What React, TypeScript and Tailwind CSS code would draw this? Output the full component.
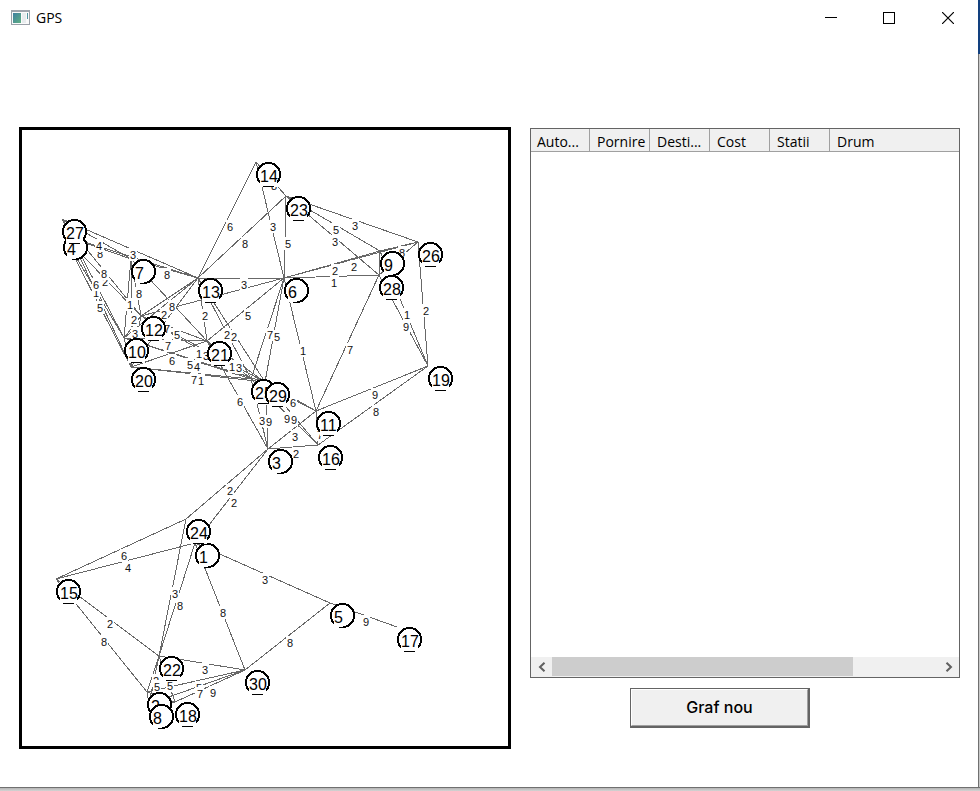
import React from "react";

type Point = [number, number];

// Top-left corner of every station's circle, in canvas units.
const stations: Record<number, Point> = {
  1: [195, 543], 2: [147, 692], 3: [268, 449], 4: [63, 235], 5: [330, 603],
  6: [284, 278], 7: [131, 259], 8: [149, 704], 9: [380, 251], 10: [124, 338],
  11: [316, 411], 12: [141, 316], 13: [198, 278], 14: [256, 162], 15: [56, 579],
  16: [318, 445], 17: [397, 627], 18: [175, 702], 19: [428, 366], 20: [131, 367],
  21: [207, 341], 22: [159, 656], 23: [286, 196], 24: [186, 519], 25: [251, 379],
  26: [418, 242], 27: [62, 219], 28: [379, 275], 29: [265, 382], 30: [245, 670],
};

// [from, to, cost]; a cost of 0 has its label hidden.
const roads: [number, number, number][] = [
  [1, 5, 3], [1, 15, 4], [1, 22, 8], [1, 30, 8], [3, 1, 2], [3, 24, 2],
  [2, 8, 0], [2, 15, 8], [2, 18, 0], [2, 22, 2], [2, 30, 5], [3, 11, 3],
  [3, 16, 2], [3, 21, 6], [3, 25, 3], [3, 29, 9], [4, 7, 8], [4, 10, 1],
  [4, 12, 2], [4, 13, 0], [4, 20, 5], [5, 17, 9], [5, 30, 8], [6, 9, 2],
  [6, 11, 1], [6, 12, 0], [6, 13, 3], [6, 14, 3], [6, 21, 5], [6, 23, 5],
  [6, 25, 7], [6, 26, 2], [6, 28, 1], [6, 29, 5], [7, 10, 1], [7, 12, 8],
  [7, 13, 8], [7, 20, 2], [7, 21, 8], [8, 18, 0], [8, 22, 5], [8, 30, 7],
  [9, 19, 1], [9, 23, 5], [9, 26, 8], [9, 28, 0], [10, 12, 3], [10, 13, 2],
  [10, 20, 0], [10, 21, 7], [10, 25, 5], [10, 27, 6], [10, 29, 4], [11, 16, 7],
  [11, 19, 9], [11, 25, 0], [11, 28, 7], [11, 29, 6], [12, 13, 0], [12, 20, 0],
  [13, 20, 7], [12, 21, 5], [12, 25, 1], [12, 27, 8], [12, 29, 3], [7, 27, 4],
  [13, 14, 6], [13, 21, 2], [13, 23, 8], [13, 25, 2], [13, 27, 3], [13, 29, 2],
  [14, 23, 8], [15, 22, 2], [15, 24, 6], [16, 19, 8], [16, 25, 9], [16, 29, 9],
  [18, 22, 5], [18, 30, 9], [19, 26, 2], [19, 28, 9], [20, 21, 6], [20, 25, 7],
  [20, 27, 0], [20, 29, 1], [21, 25, 1], [21, 29, 3], [22, 24, 3], [22, 30, 3],
  [23, 26, 3], [23, 28, 3], [26, 28, 0],
];

function Graph() {
  return (
    <svg viewBox="22 130 486 616" className="block h-auto w-full font-['Liberation_Sans',sans-serif]" role="img" aria-label="Graf">
      <g stroke="#686868" strokeWidth="1" shapeRendering="crispEdges">
        {roads.map(([a, b]) => (
          <line key={`${a}-${b}`} x1={stations[a][0]} y1={stations[a][1]} x2={stations[b][0]} y2={stations[b][1]} />
        ))}
      </g>
      <g fontSize="11">
        {roads.filter((r) => r[2] > 0).map(([a, b, cost]) => {
          const x = Math.floor((stations[a][0] + stations[b][0]) / 2);
          const y = Math.floor((stations[a][1] + stations[b][1]) / 2);
          return (
            <g key={`${a}-${b}`}>
              <rect x={x - 1} y={y} width="8" height="13" fill="#fff" />
              <text x={x} y={y + 11} fill="#111">{cost}</text>
            </g>
          );
        })}
      </g>
      <g fontSize="16">
        {Object.entries(stations).map(([name, [left, top]]) => {
          const cx = left + 12.5;
          const cy = top + 12.5;
          const wide = name.length > 1;
          return (
            <g key={name}>
              <circle cx={cx} cy={cy} r="11.6" fill="#fff" stroke="#000" strokeWidth="2" shapeRendering="crispEdges" />
              <rect x={left + 4} y={top + 6} width={wide ? 17 : 9} height={wide ? 19 : 18} fill="#fff" />
              {wide && <rect x={left + 7} y={top + 24} width="11" height="1" fill="#000" />}
              <text x={left + 4} y={top + 20} fill="#000">{name}</text>
            </g>
          );
        })}
      </g>
    </svg>
  );
}

const columns = ["Pornire", "Desti...", "Cost", "Statii"];

function RouteList() {
  return (
    <div className="flex h-[550px] flex-col border border-[#646464] bg-white">
      <table className="w-full table-fixed border-separate border-spacing-0 text-left text-sm leading-[18px] text-black">
        <thead>
          <tr className="h-[23px] bg-[#f0f0f0]">
            <th scope="col" className="w-[59px] whitespace-nowrap border-r border-b border-[#a0a0a0] p-0 pl-1.5 pt-1 font-normal">
              Auto...
            </th>
            {columns.map((name) => (
              <th key={name} scope="col" className="w-[60px] whitespace-nowrap border-r border-b border-[#a0a0a0] p-0 pl-[7px] pt-1 font-normal">
                {name}
              </th>
            ))}
            <th scope="col" className="border-b border-[#a0a0a0] p-0 pl-[7px] pt-1 font-normal">Drum</th>
          </tr>
        </thead>
        <tbody />
      </table>
      <div className="mt-auto flex h-5 items-stretch bg-[#f0f0f0]">
        <button type="button" aria-label="Stanga" className="flex w-[21px] items-center justify-center">
          <svg width="8" height="10" viewBox="0 0 8 10" fill="none" stroke="#606060" strokeWidth="2"><path d="M6.5 .7 2 5l4.500 4.300" /></svg>
        </button>
        <div className="flex grow">
          <div className="mb-px w-[78%] bg-[#cdcdcd]" />
        </div>
        <button type="button" aria-label="Dreapta" className="flex w-[21px] items-center justify-center">
          <svg width="8" height="10" viewBox="0 0 8 10" fill="none" stroke="#606060" strokeWidth="2"><path d="M1.500 .7 6 5 1.500 9.300" /></svg>
        </button>
      </div>
    </div>
  );
}

function TitleBar() {
  return (
    <header className="flex h-9 items-center pl-[11px]">
      <svg width="19" height="16" viewBox="0 0 19 16" shapeRendering="crispEdges" aria-hidden="true">
        <defs>
          <linearGradient id="pane" x1="0" y1="0" x2="1" y2="1">
            <stop offset="0" stopColor="#3f7fa0" />
            <stop offset="1" stopColor="#5fb083" />
          </linearGradient>
        </defs>
        <rect x=".5" y=".5" width="18" height="14" fill="#fafafa" stroke="#9aa0a8" />
        <rect x="0" y="0" width="19" height="2" fill="#9fa5ad" />
        <rect x="2" y="3" width="8" height="10" fill="url(#pane)" />
        <rect x="11" y="3" width="4" height="10" fill="#e8ecee" />
        <rect x="16" y="3" width="1" height="6" fill="#4f94a0" />
      </svg>
      <h1 className="ml-1.5 grow text-sm text-black">GPS</h1>
      <button type="button" aria-label="Minimize" className="flex h-9 w-[58px] items-center justify-center">
        <svg width="12" height="12" viewBox="0 0 12 12" shapeRendering="crispEdges"><path d="M0 5.500h12" stroke="#000" /></svg>
      </button>
      <button type="button" aria-label="Maximize" className="flex h-9 w-[58px] items-center justify-center">
        <svg width="12" height="12" viewBox="0 0 12 12" shapeRendering="crispEdges"><rect x=".5" y=".5" width="11" height="11" fill="none" stroke="#000" /></svg>
      </button>
      <button type="button" aria-label="Close" className="flex h-9 w-[60px] items-center justify-center">
        <svg width="12" height="12" viewBox="0 0 12 12"><path d="m0 0 12 12M12 0 0 12" stroke="#000" strokeWidth="1.200" /></svg>
      </button>
    </header>
  );
}

export default function App() {
  return (
    <div className="flex min-h-screen flex-col bg-[#c8c8c8] font-['Open_Sans','Noto_Sans',sans-serif]">
      <div className="flex grow">
        <div className="flex min-w-0 grow flex-col bg-white">
          <TitleBar />
          <main className="grid grow grid-cols-[492fr_430fr] items-start gap-[19px] pl-[19px] pr-[18px] pt-[91px]">
            <section className="border-[3px] border-black bg-white">
              <Graph />
            </section>
            <section className="flex flex-col pt-px">
              <RouteList />
              <div className="mt-2.5 ml-[100px] flex w-[180px] border border-r-2 border-b-2 border-[#646464]">
                <button type="button" className="h-[37px] grow border border-t-white border-l-white border-r-[#a0a0a0] border-b-[#a0a0a0] bg-[#f0f0f0] pb-0.5 font-['Inter',sans-serif] text-base font-medium text-black">
                  Graf nou
                </button>
              </div>
            </section>
          </main>
        </div>
        <div className="flex w-0.5 shrink-0 flex-col">
          <div className="h-[54px] bg-[#12407f]" />
          <div className="grow border-l border-[#707070] bg-[#c8c8c8]" />
        </div>
      </div>
      <div className="h-1 border-t border-[#707070] bg-gradient-to-b from-[#b4b4b4] to-[#d4d4d4]" />
    </div>
  );
}
